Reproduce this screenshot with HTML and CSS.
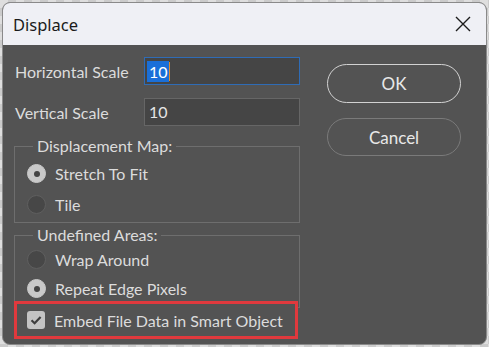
FILE: index.html
```html
<!DOCTYPE html>
<html lang="en">
<head>
    <meta charset="UTF-8">
    <title>Displace</title>
    <link rel="stylesheet" href="styles.css">
</head>
<body>
<div class="win">
    <div class="titlebar">
        <span class="title">Displace</span>
        <svg class="close" width="16" height="16" viewBox="0 0 16 16"><path d="M1 1L15 15M15 1L1 15" stroke="#1c1c1c" stroke-width="1.4" fill="none"/></svg>
    </div>
    <div class="body">
        <div class="left">
            <div class="row">
                <span class="label">Horizontal Scale</span>
                <div class="field focus"><span class="sel">10</span><span class="caret"></span></div>
            </div>
            <div class="row">
                <span class="label">Vertical Scale</span>
                <div class="field">10</div>
            </div>
            <fieldset class="group">
                <legend>Displacement Map:</legend>
                <div class="opt"><span class="radio on"></span>Stretch To Fit</div>
                <div class="opt"><span class="radio"></span>Tile</div>
            </fieldset>
            <fieldset class="group g2">
                <legend>Undefined Areas:</legend>
                <div class="opt"><span class="radio"></span>Wrap Around</div>
                <div class="opt"><span class="radio on"></span>Repeat Edge Pixels</div>
            </fieldset>
            <div class="embed">
                <span class="check"><svg width="18" height="18" viewBox="0 0 18 18"><path d="M4.5 9.2L7.6 12.2L13.6 6" stroke="#3e3e3e" stroke-width="2.2" fill="none"/></svg></span>
                Embed File Data in Smart Object
            </div>
        </div>
        <div class="right">
            <div class="btn ok">OK</div>
            <div class="btn cancel">Cancel</div>
        </div>
    </div>
</div>
</body>
</html>
```

FILE: styles.css
```css
html,body{
    height: 100%;
}
*{
    margin:0;
    padding:0;
    box-sizing: border-box;
}
body{
    background-color:#d6d6d6;
    background-image: conic-gradient(#cbcbcb 25%, #dedede 0 50%, #cbcbcb 0 75%, #dedede 0);
    background-size: 16px 16px;
    font-family: Lato, "Liberation Sans", sans-serif;
    padding:2px;
}
.win{
    width:485px;
    height:343px;
    background:#535353;
    border-radius: 8px;
    overflow: hidden;
    border:1px solid #8a8a8a;
}
.titlebar{
    height:42px;
    background:#eff0f5;
    display: flex;
    align-items: center;
    justify-content: space-between;
    padding:0 15px 0 10px;
}
.title{
    font-family: "Noto Sans", sans-serif;
    font-size: 16.5px;
    color:#1a1a1a;
}
.close{
    display: block;
}
.body{
    display: flex;
    gap:27px;
    padding:12px 0 0 11px;
}
.left{
    width:286px;
}
.row{
    display: flex;
    align-items: center;
    justify-content: space-between;
    height:28px;
    margin-bottom:13px;
}
.label{
    font-size: 16px;
    color:#dcdcdc;
    padding-left:1px;
}
.field{
    width:156px;
    height:28px;
    background:#454545;
    border:1px solid #666;
    color:#e6e6e6;
    font-size: 16px;
    line-height: 26px;
    padding-left:4px;
    display: flex;
    align-items: center;
}
.field.focus{
    border-color:#2f6cb6;
    padding-left:2px;
}
.sel{
    background:#1a6fd8;
    color:#fff;
    line-height: 21px;
    padding:0 1px 0 2px;
}
.caret{
    width:1px;
    height:19px;
    background:#e08a2c;
}
.group{
    border:1px solid #6e6e6e;
    padding:2px 0 2px 12px;
    margin-top:-3px;
}
.group legend{
    font-size: 16px;
    color:#dcdcdc;
    line-height: 20px;
    margin-left:6px;
    padding:0 4px;
}
.opt{
    display: flex;
    align-items: center;
    height:31px;
    font-size: 16px;
    color:#dcdcdc;
}
.g2{
    margin-top:2px;
    padding-top:0;
    padding-bottom:4px;
}
.g2 .opt{
    height:29px;
}
.radio{
    width:19px;
    height:19px;
    border-radius: 50%;
    background:#474747;
    border:1px solid #5f5f5f;
    margin-right:9px;
    display: flex;
    align-items: center;
    justify-content: center;
}
.radio.on{
    background:#c9c9c9;
    border-color:#c9c9c9;
}
.radio.on:after{
    content:'';
    width:6px;
    height:6px;
    border-radius: 50%;
    background:#444;
}
.embed{
    position: relative;
    margin-top:-7px;
    width:284px;
    height:38px;
    border:3px solid #e0393d;
    background:#535353;
    display: flex;
    align-items: center;
    padding-left:10px;
    font-size: 16px;
    color:#dcdcdc;
}
.check{
    width:18px;
    height:18px;
    border-radius: 3px;
    background:#c4c4c4;
    margin-right:9px;
}
.check svg{
    display: block;
}
.right{
    width:134px;
    padding-top:7px;
}
.btn{
    height:39px;
    border-radius: 20px;
    display: flex;
    align-items: center;
    justify-content: center;
    font-size: 17px;
    color:#e8e8e8;
    margin-bottom:15px;
}
.ok{
    border:1.5px solid #d2d2d2;
}
.cancel{
    height:38px;
    border:1px solid #7a7a7a;
}
```
